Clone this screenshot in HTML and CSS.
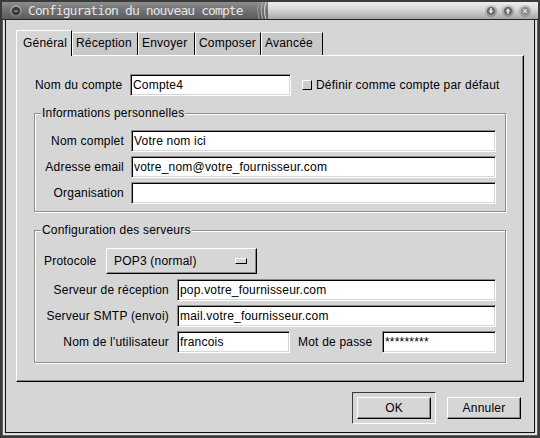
FILE: index.html
```html
<!DOCTYPE html>
<html lang="fr">
<head>
<meta charset="utf-8">
<title>Configuration du nouveau compte</title>
<link rel="stylesheet" href="styles.css">
</head>
<body>
<div class="window">
  <div class="titlebar">
    <div class="tb-left">
      <svg class="menu-btn" viewBox="0 0 12 12" width="12" height="12">
        <defs>
          <radialGradient id="mg" cx="50%" cy="35%" r="65%">
            <stop offset="0" stop-color="#d0d0d0"/>
            <stop offset="1" stop-color="#707070"/>
          </radialGradient>
        </defs>
        <circle cx="6" cy="6" r="6" fill="url(#mg)"/>
        <circle cx="6" cy="6" r="4.2" fill="#3a3a3a"/>
        <path d="M3.6 5.4 Q6 8.6 8.4 5.4 Z" fill="#a8a8a8"/>
      </svg>
      <span class="title">Configuration du nouveau compte</span>
      <svg class="ridges" viewBox="0 0 12 17" width="12" height="17">
        <path d="M3 0 Q0 8.5 3 17" stroke="#9a9a9a" stroke-width="1" fill="none"/>
        <path d="M6.5 0 Q3.5 8.5 6.5 17" stroke="#b4b4b4" stroke-width="1" fill="none"/>
        <path d="M10 0 Q7 8.5 10 17" stroke="#cccccc" stroke-width="1.2" fill="none"/>
      </svg>
    </div>
    <div class="tb-right">
      <svg class="tb-btn" viewBox="0 0 12 12" width="12" height="12">
        <defs>
          <radialGradient id="bg1" cx="45%" cy="35%" r="65%">
            <stop offset="0" stop-color="#f4f4f4"/>
            <stop offset="1" stop-color="#8e8e8e"/>
          </radialGradient>
        </defs>
        <circle cx="6" cy="6" r="6" fill="url(#bg1)"/>
        <circle cx="6" cy="6" r="4.3" fill="#6a6a6a"/>
        <path d="M5.2 3h1.6v2.6h1.6L6 8.8 3.6 5.6h1.6z" fill="#e8e8e8"/>
      </svg>
      <svg class="tb-btn" viewBox="0 0 12 12" width="12" height="12">
        <circle cx="6" cy="6" r="6" fill="url(#bg1)"/>
        <circle cx="6" cy="6" r="4.3" fill="#6a6a6a"/>
        <path d="M5.2 9h1.6V6.4h1.6L6 3.2 3.6 6.4h1.6z" fill="#e8e8e8"/>
      </svg>
      <svg class="tb-btn" viewBox="0 0 12 12" width="12" height="12">
        <circle cx="6" cy="6" r="6" fill="url(#bg1)"/>
        <circle cx="6" cy="6" r="4.3" fill="#8a8a8a"/>
        <path d="M4.2 4.2 7.8 7.8 M7.8 4.2 4.2 7.8" stroke="#dcdcdc" stroke-width="1.3"/>
      </svg>
    </div>
  </div>

  <div class="client">
    <div class="dialog">
      <div class="notebook">
        <div class="tabs">
          <div class="tab active t-gen">Général</div>
          <div class="tab t-rec">Réception</div>
          <div class="tab t-env">Envoyer</div>
          <div class="tab t-comp">Composer</div>
          <div class="tab t-av">Avancée</div>
        </div>
        <div class="panel">
          <div class="acct-row">
            <span class="acct-label">Nom du compte</span>
            <div class="entry w-acct">Compte4</div>
            <span class="check"></span>
            <span class="check-label">Définir comme compte par défaut</span>
          </div>

          <fieldset class="frame">
            <legend>Informations personnelles</legend>
            <div class="grid grid-perso">
              <span class="lbl">Nom complet</span>
              <div class="entry">Votre nom ici</div>
              <span class="lbl">Adresse email</span>
              <div class="entry">votre_nom@votre_fournisseur.com</div>
              <span class="lbl">Organisation</span>
              <div class="entry"></div>
            </div>
          </fieldset>

          <fieldset class="frame frame-srv">
            <legend>Configuration des serveurs</legend>
            <div class="srv-body">
              <div class="proto-row">
                <span class="proto-label">Protocole</span>
                <div class="option">
                  <span>POP3 (normal)</span>
                  <span class="indicator"></span>
                </div>
              </div>
              <div class="grid grid-srv">
                <span class="lbl">Serveur de réception</span>
                <div class="entry">pop.votre_fournisseur.com</div>
                <span class="lbl">Serveur SMTP (envoi)</span>
                <div class="entry">mail.votre_fournisseur.com</div>
                <span class="lbl">Nom de l'utilisateur</span>
                <div class="user-row">
                  <div class="entry w-user">francois</div>
                  <span class="pw-label">Mot de passe</span>
                  <div class="entry w-pw">*********</div>
                </div>
              </div>
            </div>
          </fieldset>
        </div>
      </div>

      <div class="buttons">
        <div class="default-frame">
          <div class="btn">OK</div>
        </div>
        <div class="btn">Annuler</div>
      </div>
    </div>
  </div>
</div>
</body>
</html>
```

FILE: styles.css
```css
* {
  box-sizing: border-box;
}

html,
body {
  margin: 0;
  padding: 0;
}

body {
  width: 540px;
  height: 438px;
  overflow: hidden;
  font-family: "Liberation Sans", Arial, sans-serif;
  font-size: 12px;
  letter-spacing: 0.2px;
  color: #000;
  background: #d6d6d6;
}

.window {
  width: 540px;
  height: 438px;
  border: 2px solid #3a3a3a;
  background: #5e5e5e;
  display: flex;
  flex-direction: column;
}

/* ---------- title bar ---------- */
.titlebar {
  flex: none;
  height: 18px;
  border-bottom: 1px solid #262626;
  display: flex;
}

.tb-left {
  width: 266px;
  display: flex;
  align-items: center;
  background: linear-gradient(#8e8e8e, #767676 40%, #5c5c5c);
}

.menu-btn {
  display: block;
  margin-left: 8px;
  flex: none;
}

.title {
  margin-left: 6px;
  font-family: "DejaVu Sans Mono", monospace;
  font-size: 13px;
  letter-spacing: -0.9px;
  color: #e6e6e6;
  white-space: nowrap;
}

.ridges {
  display: block;
  margin-left: auto;
  flex: none;
}

.tb-right {
  flex: 1;
  display: flex;
  justify-content: flex-end;
  align-items: center;
  gap: 5px;
  padding-right: 7px;
  background: linear-gradient(#ededed, #d6d6d6 45%, #a6a6a6);
}

.tb-btn {
  display: block;
  flex: none;
}

/* ---------- client area ---------- */
.client {
  flex: 1;
  margin: 0 1px 1px;
  border: 1px solid #e6e6e6;
  border-top: none;
  padding: 0 1px 1px;
  background: #d6d6d6;
  display: flex;
}

.dialog {
  flex: 1;
  border: 1px solid #111;
  border-top: none;
  display: flex;
  flex-direction: column;
}

/* ---------- notebook ---------- */
.notebook {
  margin: 10px 10px 0;
}

.tabs {
  display: flex;
  align-items: flex-end;
  height: 25px;
}

.tab {
  height: 23px;
  line-height: 21px;
  padding-left: 3px;
  background: #c8c8c8;
  border: 1px solid #fff;
  border-right-color: #000;
  border-bottom: none;
  white-space: nowrap;
}

.tab.active {
  height: 26px;
  line-height: 24px;
  margin-bottom: -1px;
  padding-left: 6px;
  background: #d6d6d6;
  position: relative;
  z-index: 1;
}

.t-gen { width: 56px; }
.t-rec { width: 66px; }
.t-env { width: 57px; }
.t-comp { width: 66px; }
.t-av { width: 62px; }

.panel {
  border: 1px solid #fff;
  border-right-color: #000;
  border-bottom-color: #000;
  box-shadow: inset -1px -1px 0 #8a8a8a;
  padding: 18px 0 18px;
}

.acct-row {
  display: flex;
  align-items: center;
  height: 22px;
  padding-left: 18px;
}

.acct-label {
  width: 95px;
  white-space: nowrap;
}

.entry {
  height: 22px;
  line-height: 20px;
  padding-left: 2px;
  background: #fff;
  border: 1px solid;
  border-color: #8a8a8a #fff #fff #8a8a8a;
  box-shadow: inset 1px 1px 0 #000, inset -1px -1px 0 #d6d6d6;
  white-space: nowrap;
  overflow: hidden;
}

.w-acct {
  width: 161px;
}

.check {
  width: 10px;
  height: 10px;
  margin-left: 11px;
  background: #cccccc;
  border: 1px solid;
  border-color: #fff #000 #000 #fff;
}

.check-label {
  margin-left: 4px;
  white-space: nowrap;
}

/* ---------- frames ---------- */
.frame {
  margin: 10px 17px 0;
  padding: 0;
  min-width: 0;
  border: 1px solid #8e8e8e;
  box-shadow: inset 1px 1px 0 #fff, 1px 1px 0 #fff;
}

.frame legend {
  margin-left: 6px;
  padding: 0 1px;
  line-height: 14px;
  background: #d6d6d6;
}

.frame-srv {
  margin-top: 11px;
}

.grid {
  display: grid;
  row-gap: 4px;
}

.grid .lbl {
  text-align: right;
  align-self: center;
  white-space: nowrap;
}

.grid-perso {
  grid-template-columns: 80px 1fr;
  column-gap: 7px;
  padding: 10px 9px 7px;
}

.srv-body {
  padding: 11px 9px 9px;
}

.proto-row {
  display: flex;
  align-items: center;
  height: 26px;
  margin-bottom: 5px;
}

.proto-label {
  width: 62px;
}

.option {
  width: 151px;
  height: 26px;
  display: flex;
  align-items: center;
  justify-content: space-between;
  padding: 0 9px 0 7px;
  border: 1px solid;
  border-color: #fff #000 #000 #fff;
  box-shadow: inset -1px -1px 0 #8a8a8a;
}

.indicator {
  width: 12px;
  height: 6px;
  border: 1px solid;
  border-color: #fff #000 #000 #fff;
}

.grid-srv {
  grid-template-columns: 125px 1fr;
  column-gap: 8px;
}

.user-row {
  display: flex;
  align-items: center;
}

.w-user {
  width: 113px;
}

.pw-label {
  flex: 1;
  padding-left: 8px;
  white-space: nowrap;
}

.w-pw {
  width: 114px;
}

/* ---------- buttons ---------- */
.buttons {
  display: flex;
  justify-content: flex-end;
  align-items: center;
  gap: 11px;
  margin-top: 10px;
  padding-right: 13px;
}

.default-frame {
  border: 1px solid;
  border-color: #3a3a3a #fff #fff #3a3a3a;
  padding: 4px;
}

.btn {
  width: 74px;
  height: 22px;
  display: flex;
  align-items: center;
  justify-content: center;
  border: 1px solid;
  border-color: #fff #000 #000 #fff;
  box-shadow: inset -1px -1px 0 #8a8a8a;
}
```
